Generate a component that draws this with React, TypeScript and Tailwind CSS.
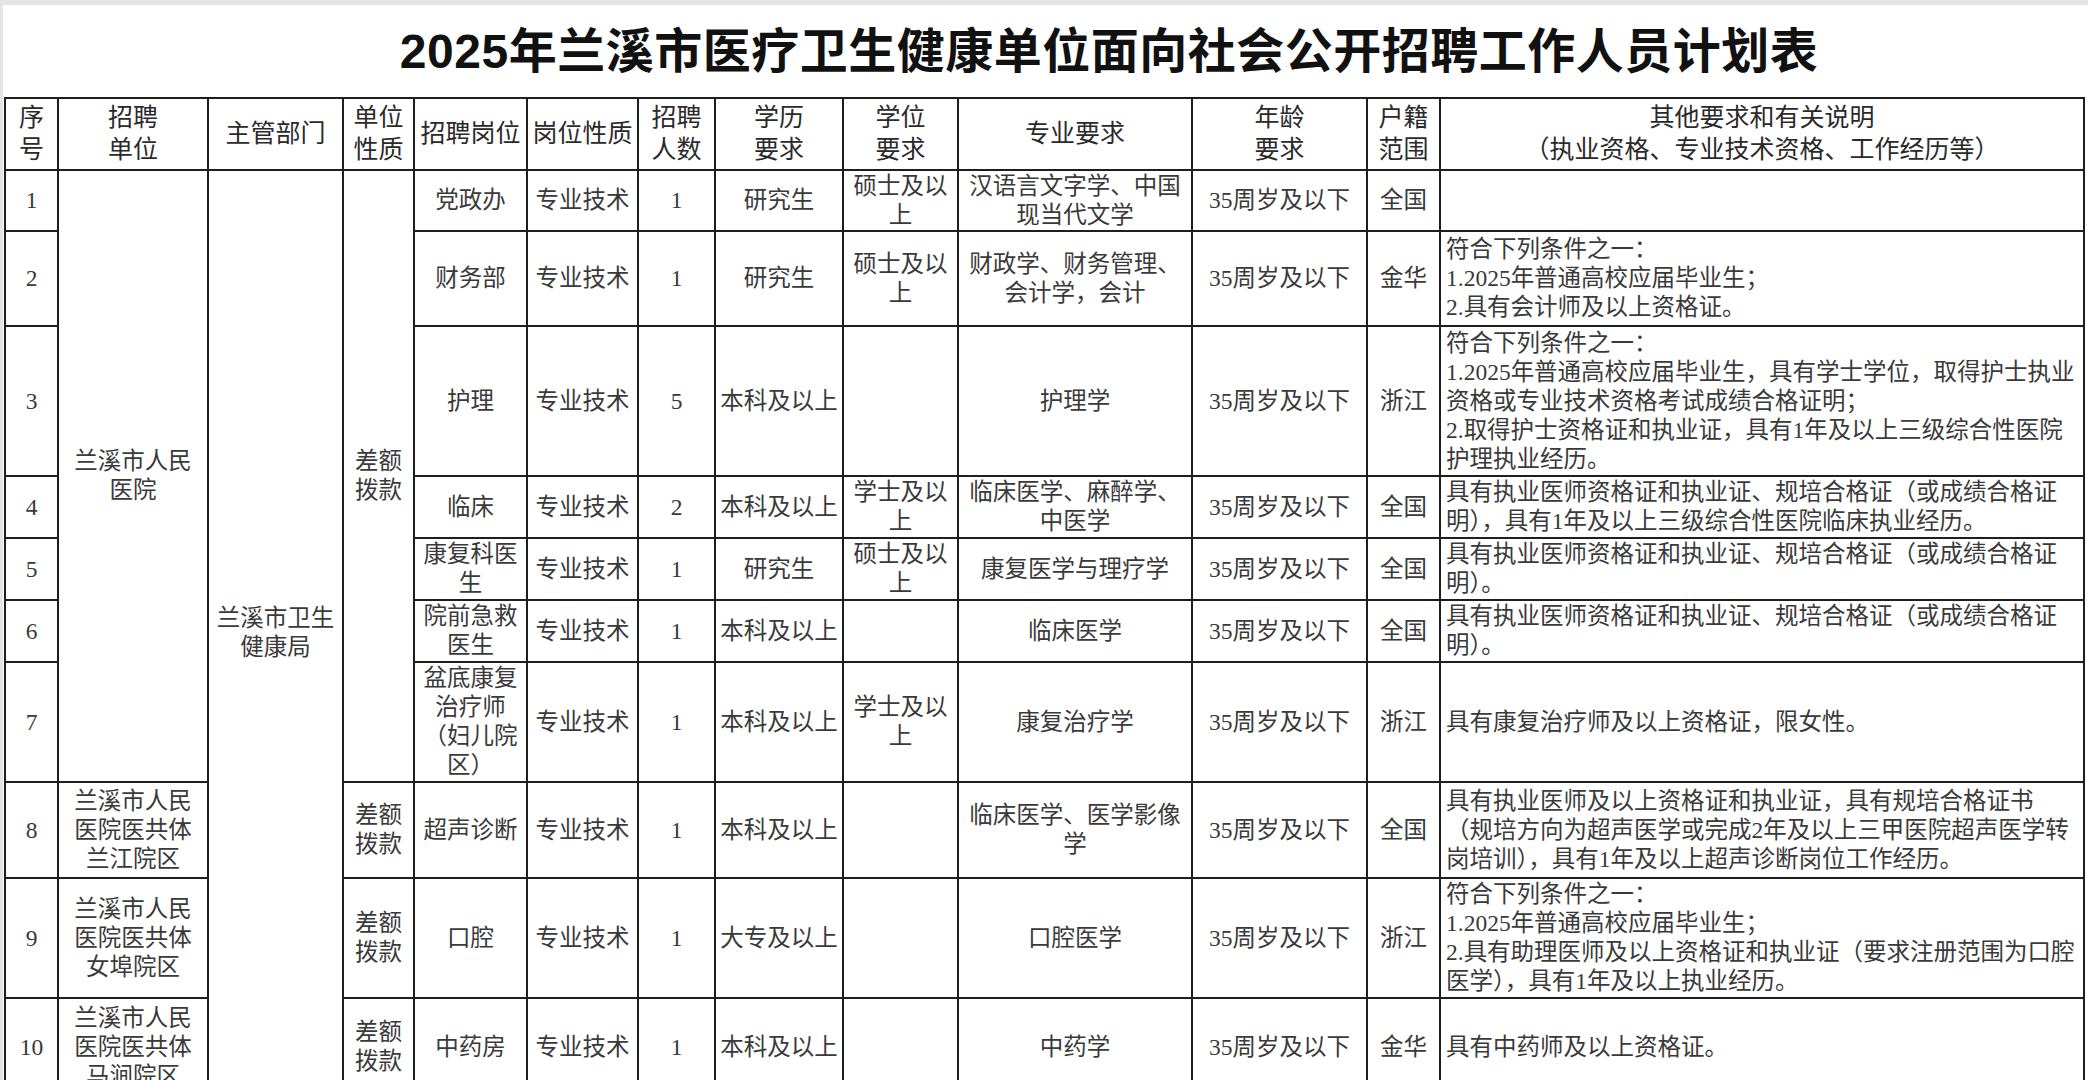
import React from 'react';

type Job = {
  no: string;
  unit?: string;
  post: string;
  count: string;
  edu: string;
  degree: string;
  major: string;
  area: string;
  note: string;
  rowClass: string;
};

const jobs: Job[] = [
  {
    no: '1',
    post: '党政办',
    count: '1',
    edu: '研究生',
    degree: '硕士及以\n上',
    major: '汉语言文字学、中国\n现当代文学',
    area: '全国',
    note: '',
    rowClass: 'h-[61px]',
  },
  {
    no: '2',
    post: '财务部',
    count: '1',
    edu: '研究生',
    degree: '硕士及以\n上',
    major: '财政学、财务管理、\n会计学，会计',
    area: '金华',
    note: '符合下列条件之一：\n1.2025年普通高校应届毕业生；\n2.具有会计师及以上资格证。',
    rowClass: 'h-[95px]',
  },
  {
    no: '3',
    post: '护理',
    count: '5',
    edu: '本科及以上',
    degree: '',
    major: '护理学',
    area: '浙江',
    note: '符合下列条件之一：\n1.2025年普通高校应届毕业生，具有学士学位，取得护士执业\n资格或专业技术资格考试成绩合格证明；\n2.取得护士资格证和执业证，具有1年及以上三级综合性医院\n护理执业经历。',
    rowClass: 'h-[150px]',
  },
  {
    no: '4',
    post: '临床',
    count: '2',
    edu: '本科及以上',
    degree: '学士及以\n上',
    major: '临床医学、麻醉学、\n中医学',
    area: '全国',
    note: '具有执业医师资格证和执业证、规培合格证（或成绩合格证\n明），具有1年及以上三级综合性医院临床执业经历。',
    rowClass: 'h-[62px]',
  },
  {
    no: '5',
    post: '康复科医\n生',
    count: '1',
    edu: '研究生',
    degree: '硕士及以\n上',
    major: '康复医学与理疗学',
    area: '全国',
    note: '具有执业医师资格证和执业证、规培合格证（或成绩合格证\n明）。',
    rowClass: 'h-[62px]',
  },
  {
    no: '6',
    post: '院前急救\n医生',
    count: '1',
    edu: '本科及以上',
    degree: '',
    major: '临床医学',
    area: '全国',
    note: '具有执业医师资格证和执业证、规培合格证（或成绩合格证\n明）。',
    rowClass: 'h-[62px]',
  },
  {
    no: '7',
    post: '盆底康复\n治疗师\n（妇儿院\n区）',
    count: '1',
    edu: '本科及以上',
    degree: '学士及以\n上',
    major: '康复治疗学',
    area: '浙江',
    note: '具有康复治疗师及以上资格证，限女性。',
    rowClass: 'h-[120px]',
  },
  {
    no: '8',
    unit: '兰溪市人民\n医院医共体\n兰江院区',
    post: '超声诊断',
    count: '1',
    edu: '本科及以上',
    degree: '',
    major: '临床医学、医学影像\n学',
    area: '全国',
    note: '具有执业医师及以上资格证和执业证，具有规培合格证书\n（规培方向为超声医学或完成2年及以上三甲医院超声医学转\n岗培训），具有1年及以上超声诊断岗位工作经历。',
    rowClass: 'h-[96px]',
  },
  {
    no: '9',
    unit: '兰溪市人民\n医院医共体\n女埠院区',
    post: '口腔',
    count: '1',
    edu: '大专及以上',
    degree: '',
    major: '口腔医学',
    area: '浙江',
    note: '符合下列条件之一：\n1.2025年普通高校应届毕业生；\n2.具有助理医师及以上资格证和执业证（要求注册范围为口腔\n医学），具有1年及以上执业经历。',
    rowClass: 'h-[120px]',
  },
  {
    no: '10',
    unit: '兰溪市人民\n医院医共体\n马涧院区',
    post: '中药房',
    count: '1',
    edu: '本科及以上',
    degree: '',
    major: '中药学',
    area: '金华',
    note: '具有中药师及以上资格证。',
    rowClass: 'h-[98px]',
  },
];

const td =
  'border-2 border-[#1e1e1e] px-[3px] py-0 text-center align-middle whitespace-pre leading-[29px]';
const th =
  'border-2 border-[#1e1e1e] px-[3px] py-0 text-center align-middle whitespace-pre leading-[32px] font-normal text-[25px]';

const App: React.FC = () => {
  return (
    <div className="h-[1080px] w-full overflow-hidden bg-white border-t-[5px] border-l-[3px] border-[#e4e4e4] font-['Liberation_Serif','Noto_Sans_CJK_SC',serif] text-[#3a3a3a]">
      {/* Title */}
      <div className="h-[92px] flex items-center justify-center pl-[127px] pt-[2px]">
        <h1 className="font-['Liberation_Sans','Noto_Sans_CJK_SC',sans-serif] text-[48px] font-bold text-[#111] tracking-[0.5px]">
          2025年兰溪市医疗卫生健康单位面向社会公开招聘工作人员计划表
        </h1>
      </div>

      <table className="ml-[1px] w-[2079px] table-fixed border-collapse text-[23.5px]">
        <colgroup>
          <col className="w-[53px]" />
          <col className="w-[150px]" />
          <col className="w-[135px]" />
          <col className="w-[71px]" />
          <col className="w-[113px]" />
          <col className="w-[111px]" />
          <col className="w-[77px]" />
          <col className="w-[128px]" />
          <col className="w-[115px]" />
          <col className="w-[234px]" />
          <col className="w-[175px]" />
          <col className="w-[73px]" />
          <col className="w-[644px]" />
        </colgroup>
        <thead>
          <tr className="h-[72px] text-[#2a2a2a]">
            <th className={th}>{'序\n号'}</th>
            <th className={th}>{'招聘\n单位'}</th>
            <th className={th}>主管部门</th>
            <th className={th}>{'单位\n性质'}</th>
            <th className={th}>招聘岗位</th>
            <th className={th}>岗位性质</th>
            <th className={th}>{'招聘\n人数'}</th>
            <th className={th}>{'学历\n要求'}</th>
            <th className={th}>{'学位\n要求'}</th>
            <th className={th}>专业要求</th>
            <th className={th}>{'年龄\n要求'}</th>
            <th className={th}>{'户籍\n范围'}</th>
            <th className={th}>{'其他要求和有关说明\n（执业资格、专业技术资格、工作经历等）'}</th>
          </tr>
        </thead>
        <tbody>
          {jobs.map((job, i) => (
            <tr key={job.no} className={job.rowClass}>
              <td className={td}>{job.no}</td>
              {i === 0 && (
                <td rowSpan={7} className={td}>
                  {'兰溪市人民\n医院'}
                </td>
              )}
              {i >= 7 && <td className={td}>{job.unit}</td>}
              {i === 0 && (
                <td rowSpan={10} className={td}>
                  {'兰溪市卫生\n健康局'}
                </td>
              )}
              {i === 0 && (
                <td rowSpan={7} className={td}>
                  {'差额\n拨款'}
                </td>
              )}
              {i >= 7 && <td className={td}>{'差额\n拨款'}</td>}
              <td className={td}>{job.post}</td>
              <td className={td}>专业技术</td>
              <td className={td}>{job.count}</td>
              <td className={td}>{job.edu}</td>
              <td className={td}>{job.degree}</td>
              <td className={td}>{job.major}</td>
              <td className={td}>35周岁及以下</td>
              <td className={td}>{job.area}</td>
              <td className={`${td} text-left pl-[5px]`}>{job.note}</td>
            </tr>
          ))}
        </tbody>
      </table>
    </div>
  );
};

export default App;
